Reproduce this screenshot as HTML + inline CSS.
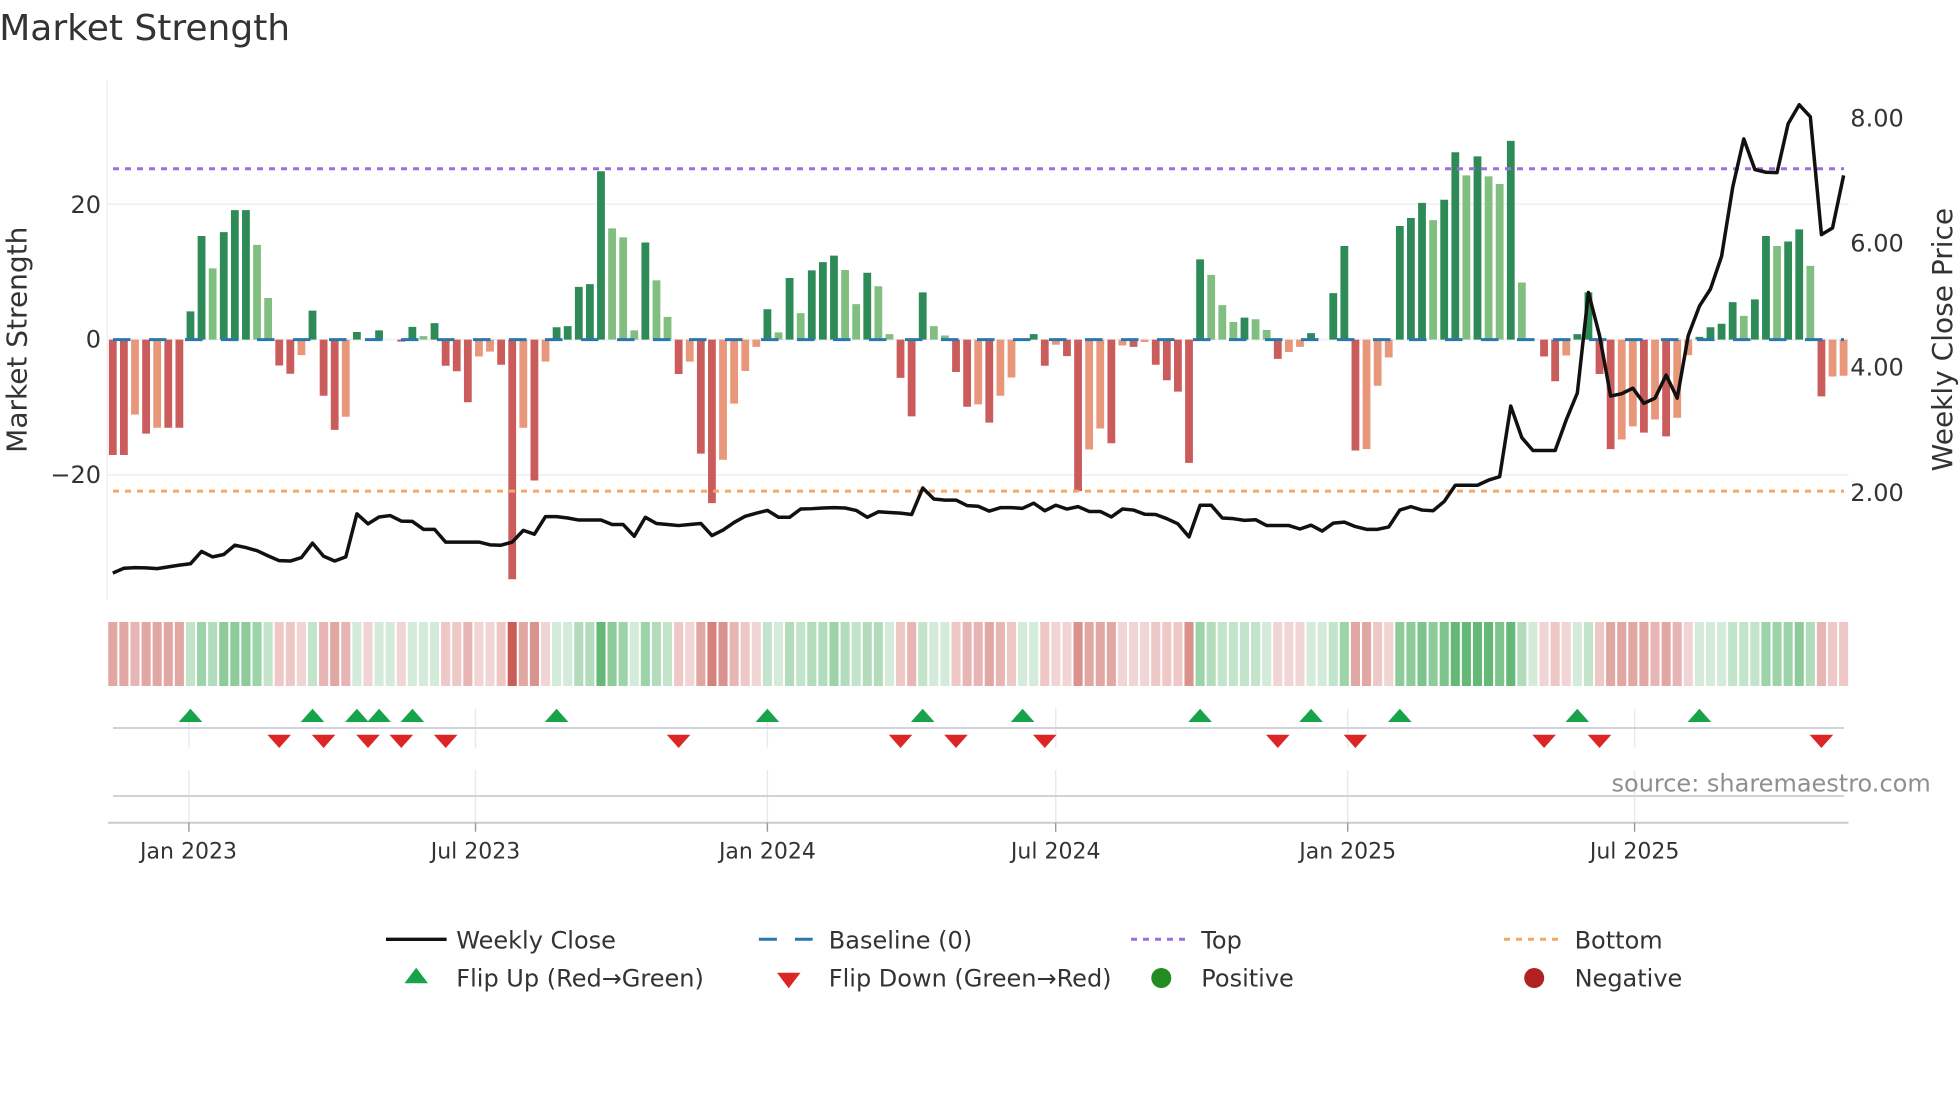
<!DOCTYPE html>
<html><head><meta charset="utf-8"><title>Market Strength</title>
<style>
html,body{margin:0;padding:0;background:#fff;width:1960px;height:1102px;overflow:hidden}
svg{display:block;position:absolute;left:0;top:0}
text{font-family:"DejaVu Sans","Liberation Sans",sans-serif;fill:#333}
.ns{vector-effect:non-scaling-stroke;fill:none}
.t{font-size:24px}.x{font-size:22px;text-anchor:middle}.r{text-anchor:end}
</style></head><body>
<svg width="1960" height="1102" viewBox="0 0 1960 1102" xmlns="http://www.w3.org/2000/svg">
<defs>
<path id="u" d="M-11.8 0h23.6L0-13.3z" fill="#16a34a"/>
<path id="d" d="M-11.8 0h23.6L0 13.3z" fill="#dc2626"/>
</defs>
<rect width="1960" height="1102" fill="#fff"/>
<text x="-0.8" y="39.8" font-size="36">Market Strength</text>

<path d="M107.3 81V600" stroke="#eef0f2" stroke-width="1.6" fill="none"/>
<path d="M107.5 204.3H1848.5M107.5 339.6H1848.5M107.5 475H1848.5" stroke="#f0f2f4" stroke-width="2" fill="none"/>

<g transform="translate(112.8 60) scale(11.095 .34435)">
<path class="ns" stroke="#2e8b57" stroke-width="7.8" d="M7 812V730M8 812V511M10 812V500M11 812V436M12 812V436M18 812V728M22 812V790M24 812V785M27 812V775M29 812V764M40 812V776M41 812V773M42 812V659M43 812V651M44 812V323M48 812V530M59 812V724M61 812V633M63 812V611M64 812V587M65 812V568M68 812V618M73 812V675M83 812V796M98 812V579M102 812V748M108 812V793M110 812V677M111 812V540M116 812V482M117 812V459M118 812V415M120 812V406M121 812V268M123 812V280M126 812V235M132 812V796M133 812V675M143 812V804M144 812V776M145 812V766M146 812V703M148 812V695M149 812V511M151 812V527M152 812V492"/>
<path class="ns" stroke="#81bf81" stroke-width="7.8" d="M9 812V605M13 812V537M14 812V691M28 812V802M45 812V489M46 812V515M47 812V785M49 812V640M50 812V746M60 812V791M62 812V735M66 812V610M67 812V709M69 812V657M70 812V796M74 812V773M75 812V800M99 812V624M100 812V712M101 812V761M103 812V753M104 812V784M119 812V465M122 812V335M124 812V338M125 812V360M127 812V646M147 812V743M150 812V540M153 812V598"/>
<path class="ns" stroke="#cb5c5c" stroke-width="7.8" d="M0 812V1147M1 812V1147M3 812V1085M5 812V1068M6 812V1068M15 812V887M16 812V911M19 812V975M20 812V1074M26 812V818M30 812V888M31 812V904M32 812V994M35 812V885M36 812V1508M38 812V1221M51 812V912M53 812V1143M54 812V1287M71 812V923M72 812V1035M76 812V906M77 812V1007M79 812V1053M84 812V888M86 812V860M87 812V1252M90 812V1113M92 812V833M94 812V885M95 812V930M96 812V963M97 812V1170M105 812V868M112 812V1134M129 812V861M130 812V933M134 812V912M135 812V1130M138 812V1082M140 812V1093M154 812V977"/>
<path class="ns" stroke="#e8977a" stroke-width="7.8" d="M2 812V1030M4 812V1068M17 812V857M21 812V1036M33 812V861M34 812V847M37 812V1068M39 812V876M52 812V876M55 812V1161M56 812V998M57 812V903M58 812V833M78 812V1000M80 812V975M81 812V922M85 812V827M88 812V1131M89 812V1070M91 812V829M93 812V819M106 812V848M107 812V833M113 812V1130M114 812V946M115 812V864M131 812V858M136 812V1102M137 812V1064M139 812V1044M141 812V1039M142 812V857M155 812V919M156 812V917"/>
</g>

<path d="M113 339.6H1844" stroke="#2a78ab" stroke-width="3" stroke-dasharray="17.5 18.5" fill="none"/>
<path d="M113 168.8H1844" stroke="#9b70de" stroke-width="3" stroke-dasharray="6 6" fill="none"/>
<path d="M113 491.1H1844" stroke="#f2a866" stroke-width="3" stroke-dasharray="6 6" fill="none"/>

<g transform="translate(112.8 60) scale(11.095 .34435)">
<polyline class="ns" stroke="#111" stroke-width="3.5" stroke-linejoin="round" points="0,1490 1,1476 2,1474 3,1475 4,1477 5,1472 6,1467 7,1463 8,1427 9,1443 10,1436 11,1409 12,1416 13,1425 14,1440 15,1454 16,1455 17,1445 18,1403 19,1441 20,1455 21,1443 22,1318 23,1347 24,1327 25,1323 26,1339 27,1340 28,1363 29,1363 30,1400 31,1400 32,1400 33,1400 34,1408 35,1409 36,1400 37,1366 38,1377 39,1326 40,1326 41,1330 42,1336 43,1336 44,1336 45,1349 46,1349 47,1383 48,1328 49,1346 50,1349 51,1352 52,1349 53,1346 54,1381 55,1365 56,1343 57,1325 58,1316 59,1308 60,1328 61,1328 62,1304 63,1303 64,1301 65,1300 66,1301 67,1308 68,1328 69,1312 70,1314 71,1316 72,1320 73,1243 74,1275 75,1278 76,1278 77,1294 78,1296 79,1310 80,1300 81,1300 82,1302 83,1287 84,1309 85,1293 86,1304 87,1297 88,1311 89,1311 90,1327 91,1304 92,1307 93,1319 94,1320 95,1332 96,1347 97,1385 98,1293 99,1293 100,1330 101,1332 102,1337 103,1335 104,1352 105,1352 106,1352 107,1362 108,1351 109,1368 110,1345 111,1342 112,1355 113,1363 114,1363 115,1356 116,1307 117,1297 118,1307 119,1309 120,1282 121,1235 122,1235 123,1235 124,1220 125,1210 126,1005 127,1097 128,1134 129,1134 130,1134 131,1045 132,967 133,675 134,800 135,976 136,969 137,953 138,997 139,982 140,915 141,982 142,800 143,715 144,665 145,570 146,370 147,229 148,318 149,326 150,327 151,185 152,130 153,165 154,507 155,488 156,335"/>
</g>

<g transform="translate(112.8 0) scale(11.095 1)">
<g stroke="#c95e58">
<path class="ns" stroke-width="9.1" stroke-opacity=".26" d="M17 622V686M23 622V686M26 622V686M33 622V686M34 622V686M39 622V686M52 622V686M58 622V686M85 622V686M86 622V686M91 622V686M92 622V686M93 622V686M105 622V686M106 622V686M107 622V686M115 622V686M129 622V686M131 622V686M142 622V686"/>
<path class="ns" stroke-width="9.1" stroke-opacity=".34" d="M15 622V686M16 622V686M30 622V686M31 622V686M35 622V686M51 622V686M57 622V686M71 622V686M76 622V686M81 622V686M84 622V686M94 622V686M95 622V686M96 622V686M114 622V686M130 622V686M134 622V686M155 622V686M156 622V686"/>
<path class="ns" stroke-width="9.1" stroke-opacity=".45" d="M2 622V686M19 622V686M21 622V686M32 622V686M56 622V686M72 622V686M77 622V686M78 622V686M80 622V686M139 622V686M141 622V686M154 622V686"/>
<path class="ns" stroke-width="9.1" stroke-opacity=".55" d="M0 622V686M1 622V686M3 622V686M4 622V686M5 622V686M6 622V686M20 622V686M37 622V686M53 622V686M79 622V686M88 622V686M89 622V686M90 622V686M112 622V686M113 622V686M135 622V686M136 622V686M137 622V686M138 622V686M140 622V686"/>
<path class="ns" stroke-width="9.1" stroke-opacity=".68" d="M38 622V686M55 622V686M87 622V686M97 622V686"/>
<path class="ns" stroke-width="9.1" stroke-opacity=".78" d="M54 622V686"/>
<path class="ns" stroke-width="9.1" stroke-opacity="1" d="M36 622V686"/>
</g>
<g stroke="#57b36b">
<path class="ns" stroke-width="9.1" stroke-opacity=".26" d="M22 622V686M24 622V686M25 622V686M27 622V686M28 622V686M29 622V686M40 622V686M41 622V686M47 622V686M60 622V686M70 622V686M74 622V686M75 622V686M82 622V686M83 622V686M104 622V686M108 622V686M109 622V686M128 622V686M132 622V686M143 622V686M144 622V686M145 622V686"/>
<path class="ns" stroke-width="9.1" stroke-opacity=".36" d="M7 622V686M14 622V686M18 622V686M50 622V686M59 622V686M62 622V686M67 622V686M73 622V686M100 622V686M101 622V686M102 622V686M103 622V686M110 622V686M133 622V686M146 622V686M147 622V686M148 622V686"/>
<path class="ns" stroke-width="9.1" stroke-opacity=".46" d="M9 622V686M42 622V686M43 622V686M49 622V686M61 622V686M63 622V686M64 622V686M66 622V686M68 622V686M69 622V686M99 622V686M127 622V686M153 622V686"/>
<path class="ns" stroke-width="9.1" stroke-opacity=".58" d="M8 622V686M13 622V686M46 622V686M48 622V686M65 622V686M98 622V686M111 622V686M149 622V686M150 622V686M151 622V686"/>
<path class="ns" stroke-width="9.1" stroke-opacity=".68" d="M10 622V686M11 622V686M12 622V686M45 622V686M116 622V686M117 622V686M119 622V686M152 622V686"/>
<path class="ns" stroke-width="9.1" stroke-opacity=".78" d="M118 622V686M120 622V686M125 622V686"/>
<path class="ns" stroke-width="9.1" stroke-opacity=".92" d="M44 622V686M121 622V686M122 622V686M123 622V686M124 622V686M126 622V686"/>
</g>
</g>

<path d="M188.9 708.7V747.7M188.9 770V822.7M475.5 708.7V747.7M475.5 770V822.7M767.4 708.7V747.7M767.4 770V822.7M1055.7 708.7V747.7M1055.7 770V822.7M1347.7 708.7V747.7M1347.7 770V822.7M1634.6 708.7V747.7M1634.6 770V822.7" stroke="#e6e9ee" stroke-width="1.4" fill="none"/>
<path d="M113 728H1844M113 796H1844" stroke="#d0d3d7" stroke-width="2" fill="none"/>
<path d="M108 822.7H1848.5" stroke="#cccccc" stroke-width="2" fill="none"/>
<path d="M188.9 822.7V831.7M475.5 822.7V831.7M767.4 822.7V831.7M1055.7 822.7V831.7M1347.7 822.7V831.7M1634.6 822.7V831.7" stroke="#999" stroke-width="1.4" fill="none"/>

<g>
<use href="#u" x="190.5" y="722"/><use href="#u" x="312.5" y="722"/><use href="#u" x="356.9" y="722"/><use href="#u" x="379.1" y="722"/><use href="#u" x="412.4" y="722"/><use href="#u" x="556.6" y="722"/><use href="#u" x="767.4" y="722"/><use href="#u" x="922.7" y="722"/><use href="#u" x="1022.6" y="722"/><use href="#u" x="1200.1" y="722"/><use href="#u" x="1311.1" y="722"/><use href="#u" x="1399.8" y="722"/><use href="#u" x="1577.3" y="722"/><use href="#u" x="1699.4" y="722"/>
<use href="#d" x="279.2" y="734.7"/><use href="#d" x="323.6" y="734.7"/><use href="#d" x="368" y="734.7"/><use href="#d" x="401.3" y="734.7"/><use href="#d" x="445.7" y="734.7"/><use href="#d" x="678.6" y="734.7"/><use href="#d" x="900.5" y="734.7"/><use href="#d" x="956" y="734.7"/><use href="#d" x="1044.8" y="734.7"/><use href="#d" x="1277.8" y="734.7"/><use href="#d" x="1355.4" y="734.7"/><use href="#d" x="1544.1" y="734.7"/><use href="#d" x="1599.5" y="734.7"/><use href="#d" x="1821.4" y="734.7"/>
</g>

<text class="t r" x="101" y="213.2">20</text>
<text class="t r" x="101" y="347.5">0</text>
<text class="t r" x="101" y="482.9">−20</text>
<text class="t" x="1850.3" y="126.3">8.00</text>
<text class="t" x="1850.3" y="251.5">6.00</text>
<text class="t" x="1850.3" y="375.4">4.00</text>
<text class="t" x="1850.3" y="500.8">2.00</text>
<text font-size="28" text-anchor="middle" transform="translate(26.3 339.7) rotate(-90)">Market Strength</text>
<text font-size="28" text-anchor="middle" transform="translate(1952 339.6) rotate(-90)">Weekly Close Price</text>

<text class="x" x="188.5" y="858.3">Jan 2023</text>
<text class="x" x="475.5" y="858.3">Jul 2023</text>
<text class="x" x="767.4" y="858.3">Jan 2024</text>
<text class="x" x="1055.7" y="858.3">Jul 2024</text>
<text class="x" x="1347.7" y="858.3">Jan 2025</text>
<text class="x" x="1634.6" y="858.3">Jul 2025</text>

<text class="t" x="1611.5" y="791.7" style="fill:#8f8f8f">source: sharemaestro.com</text>

<path d="M386 939.3H446.6" stroke="#111" stroke-width="3.4" fill="none"/>
<path d="M758.9 939.3H812.7" stroke="#2a78ab" stroke-width="3" stroke-dasharray="18 18" fill="none"/>
<path d="M1131 939.3H1187" stroke="#9b70de" stroke-width="3" stroke-dasharray="6 6" fill="none"/>
<path d="M1504 939.3H1560" stroke="#f2a866" stroke-width="3" stroke-dasharray="6 6" fill="none"/>
<path d="M404.5 983.3H428L416.2 967.7z" fill="#16a34a"/>
<path d="M777 972.7H800.5L788.7 988.3z" fill="#dc2626"/>
<circle cx="1161.3" cy="978" r="10" fill="#228b22"/>
<circle cx="1534.2" cy="978" r="10" fill="#b22222"/>

<text class="t" x="456.3" y="948.3">Weekly Close</text>
<text class="t" x="828.8" y="948.3">Baseline (0)</text>
<text class="t" x="1201.3" y="948.3">Top</text>
<text class="t" x="1574.6" y="948.3">Bottom</text>
<text class="t" x="456.3" y="986.7">Flip Up (Red→Green)</text>
<text class="t" x="828.8" y="986.7">Flip Down (Green→Red)</text>
<text class="t" x="1201.3" y="986.7">Positive</text>
<text class="t" x="1574.6" y="986.7">Negative</text>
</svg>
</body></html>
